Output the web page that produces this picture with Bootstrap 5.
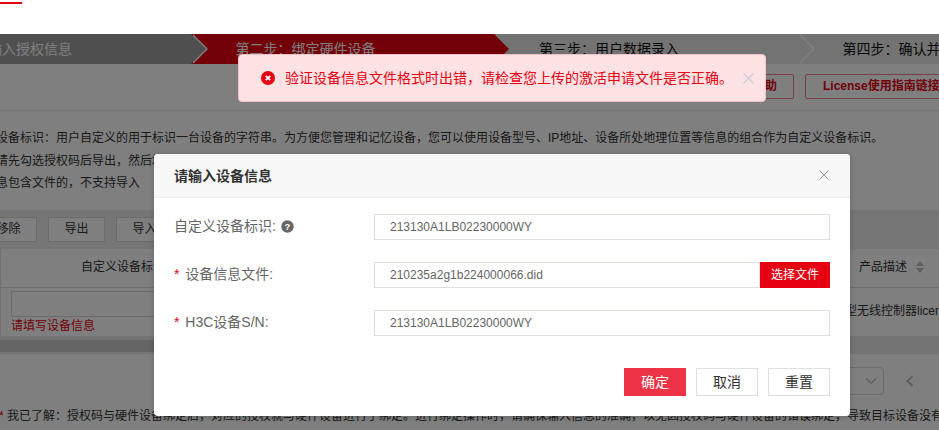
<!DOCTYPE html>
<html lang="zh-CN">
<head>
<meta charset="utf-8">
<title>绑定硬件设备</title>
<link href="https://cdn.jsdelivr.net/npm/bootstrap@5.3.0/dist/css/bootstrap.min.css" rel="stylesheet">
<style>
html,body{height:430px;overflow:hidden;background:#fff}
body{position:relative;font-family:"Liberation Sans","Noto Sans CJK SC",sans-serif;font-size:12px;color:#333}
.topmark{width:22px;height:2px;margin-top:2px;margin-bottom:30px;background:#e60012}
.scene{width:1400px;margin-left:-113px}
.stepper{height:30px;width:1400px}
.stepitem{position:relative;flex:0 0 303.5px;height:30px;line-height:30px;padding-left:45px;font-size:14px;background:#e6e6e6;color:#111}
.stepitem::before,.stepitem::after{content:"";position:absolute;top:0;width:0;height:0;border-style:solid;border-width:15px 0 15px 15px;border-color:transparent}
.stepitem::before{right:-17px;border-left-color:#fff}
.stepitem::after{right:-15px;border-left-color:#e6e6e6}
.step-done{background:#9f9f9f;color:#fff;z-index:4}
.step-done::after{border-left-color:#9f9f9f}
.step-now{background:#e60012;color:#fff;z-index:3}
.step-now::before{display:none}
.step-now::after{border-left-color:#e60012}
.step-next{z-index:2}
.step-last{z-index:1}
.step-last::before,.step-last::after{display:none}
.toolrow{height:47px;padding:10px 0 0 825px;gap:11px;border-bottom:1px solid #eee}
.redbtn{height:25px;line-height:23px;border:1px solid #e8808a;border-radius:2px;color:#e60012;font-weight:700;font-size:12px;padding:0 16px;white-space:nowrap}
.redbtn-b{width:170px;padding:0 17px}
.notes{padding:16px 0 0 109px;font-size:12px;line-height:22.5px;height:99px;color:#333;white-space:nowrap}
.notes p{margin:0}
.notes .lead-cut{margin-left:-36px}
.bandrow{height:39px;background:#ececec;padding:7px 0 0 93px;gap:11px}
.plainbtn{flex:0 0 57px;height:25px;line-height:23px;text-align:center;background:#fff;border:1px solid #d9d9d9;font-size:12px;color:#333}
.gridwrap{height:87px;background:#fff;border-left:1px solid #e4e4e4;margin-left:113px}
.gridhead{height:39px;line-height:37px;border-bottom:1px solid #ddd;font-size:12px;color:#333}
.headcell{flex:0 0 858px;padding-left:80px}
.sortmark{display:inline-block;margin-left:8px;vertical-align:-2px}
.gridrow{height:48px}
.idcell{flex:0 0 844px;padding:3px 0 0 10px}
.fakeinput{height:26px;border:1px solid #d9d9d9;width:600px}
.errtext{color:#e60012;font-size:12px;line-height:18px}
.desccell{padding-top:14px;line-height:18px;white-space:nowrap;font-size:12px}
.scrollband{height:18px;background:#e8e8e8;padding:4px 0 0 113px}
.scrollthumb{width:500px;height:12px;background:#c9c9c9}
.pagerow{height:53px;padding:13px 0 0 113px}
.pagesel{width:120px;margin-left:764px;height:28px;border:1px solid #d9d9d9;border-radius:4px;padding-right:6px}
.pagearrow{margin:8px 0 0 22px}
.agree{font-size:12px;line-height:18px;white-space:nowrap;padding-left:112px;color:#333}
.agree b{font-weight:400;color:#e60012}
.shade{position:absolute;left:0;right:0;top:34px;bottom:0;background:rgba(0,0,0,.5);z-index:10}
.dlgwrap{position:absolute;left:154px;top:154px;width:696px;z-index:20}
.dlgbox.modal-content{height:262px;border:0;border-radius:4px;background:#fff;box-shadow:0 1px 6px rgba(0,0,0,.2)}
.dlgbox .modal-header{height:44px;padding:0 20px;background:#f7f7f7;border-bottom:1px solid #eee;border-radius:4px 4px 0 0}
.dlgtitle{font-size:14px;font-weight:700;color:#333;margin:0;line-height:44px}
.xbtn{border:0;background:none;padding:0;line-height:0;margin-top:-2px;margin-right:1px}
.dlgbox .modal-body{padding:16px 20px 0;flex:0 0 auto}
.formline{height:26px;margin-bottom:22px}
.formline:last-child{margin-bottom:0}
.formlabel{flex:0 0 200px;font-size:14px;color:#666;line-height:24px;white-space:nowrap}
.formlabel i{font-style:normal;color:#e60012;margin-right:2px}
.qmark{display:inline-block;vertical-align:-2px;margin-left:5px}
.forminput{flex:1 1 auto;min-width:0;height:26px;line-height:24px;border:1px solid #dcdfe6;padding:0 15px;font-size:12px;color:#666;background:#fff;border-radius:0}
.filebtn{flex:0 0 70px;height:26px;line-height:26px;text-align:center;background:#e60012;color:#fff;font-size:12px;border:0;padding:0;border-radius:0}
.dlgbox .modal-footer{padding:32px 20px 20px;border:0;gap:10px;justify-content:flex-end;flex-wrap:nowrap}
.actbtn{flex:0 0 62px;height:28px;margin:0;padding:0;font-size:14px;line-height:26px;border-radius:0;background:#fff;border:1px solid #dcdfe6;color:#333}
.actbtn-main{background:#ee3344;border-color:#ee3344;color:#fff}
.toastbar.alert{position:absolute;left:238px;top:54px;width:528px;height:48px;z-index:30;margin:0;padding:0 0 0 22px;background:#fde2e4;border:1px solid #f3c0c8;border-radius:4px;color:#e60012;font-size:14px;line-height:46px;white-space:nowrap;gap:10px}
.toastx{border:0;background:none;padding:0;line-height:0}
</style>
</head>
<body>
<div class="topmark"></div>
<div class="scene">
  <div class="stepper d-flex">
    <div class="stepitem step-done">第一步：输入授权信息</div>
    <div class="stepitem step-now">第二步：绑定硬件设备</div>
    <div class="stepitem step-next">第三步：用户数据录入</div>
    <div class="stepitem step-last">第四步：确认并提交</div>
  </div>
  <div class="toolrow d-flex">
    <div class="redbtn">在线帮助</div>
    <div class="redbtn redbtn-b">License使用指南链接</div>
  </div>
  <div class="notes">
    <p class="lead-cut">自定义设备标识：用户自定义的用于标识一台设备的字符串。为方便您管理和记忆设备，您可以使用设备型号、IP地址、设备所处地理位置等信息的组合作为自定义设备标识。</p>
    <p>请先勾选授权码后导出，然后填写设备信息</p>
    <p>息包含文件的，不支持导入</p>
  </div>
  <div class="bandrow d-flex">
    <div class="plainbtn">移除</div>
    <div class="plainbtn">导出</div>
    <div class="plainbtn">导入</div>
  </div>
  <div class="gridwrap">
    <div class="gridhead d-flex">
      <div class="headcell">自定义设备标识</div>
      <div>产品描述<svg class="sortmark" width="10" height="12" viewBox="0 0 10 12"><path d="M5 0l4 5H1z M5 12L1 7h8z" fill="#bbb"/></svg></div>
    </div>
    <div class="gridrow d-flex">
      <div class="idcell">
        <div class="fakeinput"></div>
        <div class="errtext">请填写设备信息</div>
      </div>
      <div class="desccell">型无线控制器license</div>
    </div>
  </div>
  <div class="scrollband"><div class="scrollthumb"></div></div>
  <div class="pagerow d-flex align-items-start">
    <div class="pagesel d-flex align-items-center justify-content-end"><svg width="12" height="8" viewBox="0 0 12 8"><path d="M1 1.5l5 5 5-5" fill="none" stroke="#bbb" stroke-width="1.2"/></svg></div>
    <svg class="pagearrow" width="8" height="12" viewBox="0 0 8 12"><path d="M6.5 1L1.5 6l5 5" fill="none" stroke="#bbb" stroke-width="2"/></svg>
  </div>
  <div class="agree"><b>*</b> 我已了解：授权码与硬件设备绑定后，对应的授权就与硬件设备进行了绑定。进行绑定操作时，请确保输入信息的准确，以免因授权码与硬件设备的错误绑定，导致目标设备没有</div>
</div>
<div class="shade"></div>
<div class="dlgwrap">
  <div class="modal-content dlgbox">
    <div class="modal-header d-flex justify-content-between align-items-center">
      <h5 class="dlgtitle">请输入设备信息</h5>
      <button class="xbtn" type="button" aria-label="关闭"><svg width="10" height="10" viewBox="0 0 10 10"><path d="M.5.5l9 9M9.5.5l-9 9" stroke="#999" stroke-width="1" fill="none"/></svg></button>
    </div>
    <div class="modal-body">
      <div class="formline d-flex">
        <div class="formlabel">自定义设备标识:<svg class="qmark" width="13" height="13" viewBox="0 0 13 13"><circle cx="6.5" cy="6.5" r="6.2" fill="#666"/><text x="6.5" y="10" font-size="9.5" font-weight="700" font-family="Liberation Sans" text-anchor="middle" fill="#fff">?</text></svg></div>
        <div class="forminput">213130A1LB02230000WY</div>
      </div>
      <div class="formline d-flex">
        <div class="formlabel"><i>*</i> 设备信息文件:</div>
        <div class="forminput">210235a2g1b224000066.did</div>
        <button class="filebtn" type="button">选择文件</button>
      </div>
      <div class="formline d-flex">
        <div class="formlabel"><i>*</i> H3C设备S/N:</div>
        <div class="forminput">213130A1LB02230000WY</div>
      </div>
    </div>
    <div class="modal-footer">
      <button class="actbtn actbtn-main" type="button">确定</button>
      <button class="actbtn" type="button">取消</button>
      <button class="actbtn" type="button">重置</button>
    </div>
  </div>
</div>
<div class="toastbar alert d-flex align-items-center" role="alert">
  <svg width="14" height="14" viewBox="0 0 14 14"><circle cx="7" cy="7" r="7" fill="#e60012"/><path d="M4.8 4.8l4.4 4.4M9.2 4.8l-4.4 4.4" stroke="#fff" stroke-width="1.8"/></svg>
  <span>验证设备信息文件格式时出错，请检查您上传的激活申请文件是否正确。</span>
  <button class="toastx" type="button" aria-label="关闭"><svg width="11" height="11" viewBox="0 0 11 11"><path d="M.5.5l10 10M10.5.5l-10 10" stroke="#c8cdd6" stroke-width="1.2" fill="none"/></svg></button>
</div>
<script src="https://cdn.jsdelivr.net/npm/bootstrap@5.3.0/dist/js/bootstrap.bundle.min.js"></script>
</body>
</html>
